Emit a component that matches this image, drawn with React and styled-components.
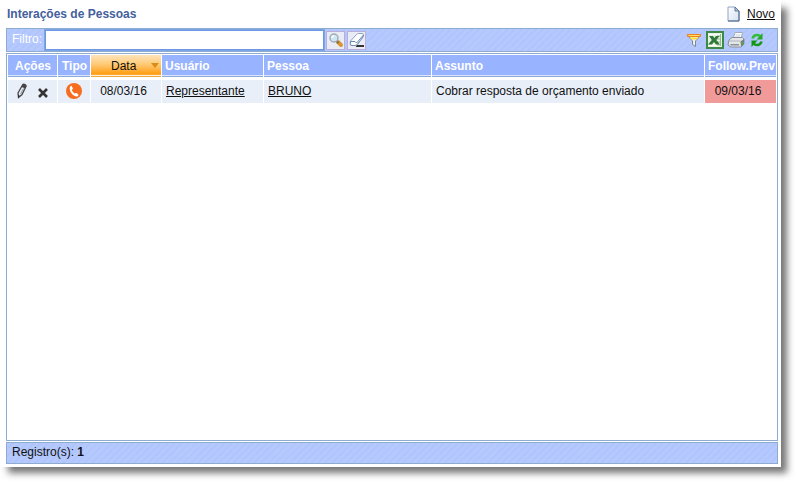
import React from 'react';
import styled, { createGlobalStyle, css } from 'styled-components';

const Global = createGlobalStyle`
  *, *::before, *::after { box-sizing: border-box; }
  body {
    margin: 0;
    background: #fff;
    color: #111;
    font: 12px/16px "Liberation Sans", Arial, sans-serif;
  }
`;

const Page = styled.div`
  display: flex;
  min-height: 100vh;
  padding: 0 14px 14px 0;
`;

const Panel = styled.main`
  flex: 1;
  min-width: 0;
  display: flex;
  flex-direction: column;
  gap: 1px;
  padding: 0 3px 3px 6px;
  background: #fff;
  box-shadow: 7px 7px 7px -1px rgba(0, 0, 0, 0.54);
`;

const TitleBar = styled.header`
  display: flex;
  align-items: center;
  justify-content: space-between;
  height: 27px;
  padding: 0 3px 0 1px;
`;

const Title = styled.h1`
  margin: 0;
  font-size: 12px;
  line-height: 16px;
  color: #43609c;
`;

const NewLink = styled.a`
  display: flex;
  align-items: center;
  gap: 7px;
  height: 26px;
  color: #111;
`;

const Strip = styled.div`
  display: flex;
  align-items: center;
  border: 1px solid #8eabd0;
  background: repeating-linear-gradient(135deg, #b5c9fe 0 3px, #afc5fb 3px 5px);
`;

const FilterBar = styled(Strip)`
  height: 24px;
  padding: 0 11px 0 5px;
`;

const FilterLabel = styled.label`
  width: 33px;
  padding-bottom: 3px;
  color: #fff;
`;

const FilterInput = styled.input`
  width: 279px;
  height: 20px;
  padding: 1px 3px;
  border: 1px solid #6c97e2;
  outline: 1px solid #7ea4ea;
  outline-offset: 0;
  background: #fff;
  font: inherit;
`;

const SearchButtons = styled.div`
  display: flex;
  gap: 2px;
  margin-left: 2px;
`;

const SmallButton = styled.button`
  display: flex;
  align-items: center;
  justify-content: center;
  width: 19px;
  height: 19px;
  padding: 0;
  border: 1px solid #b9aedb;
  background: #e9ebf5;
`;

const Tools = styled.div`
  display: flex;
  gap: 3px;
  margin-left: auto;
`;

const IconButton = styled.button`
  display: flex;
  align-items: center;
  justify-content: center;
  width: 18px;
  height: 18px;
  padding: 0;
  border: 0;
  background: transparent;
`;

const ListArea = styled.section`
  flex: 1;
  padding: 1px 0 1px 1px;
  border: 1px solid #8eabd0;
  background: #fff;
`;

const Table = styled.table`
  width: 100%;
  table-layout: fixed;
  border-spacing: 0;
`;

const Col = styled.col`
  width: ${({ $width }) => ($width ? `${$width}px` : 'auto')};
`;

const cell = css`
  overflow: hidden;
  padding: 0 0 0 4px;
  border-right: 1px solid #fff;
  text-align: ${({ $center }) => ($center ? 'center' : 'left')};
  white-space: nowrap;
`;

const HeadCell = styled.th`
  ${cell}
  height: 25px;
  padding: 0 0 4px ${({ $center }) => ($center ? '1px' : '3px')};
  background: linear-gradient(#98b3ff 0 20px, #dce6fc 20px 21px, #8aaad8 21px 22px, #fff 22px);
  color: #fff;
`;

const SortedCell = styled(HeadCell)`
  background: linear-gradient(#fee3bb 0, #ffcb78 9px, #ff9d13 19px, #ffb64d 20px, #fff0d8 20px 21px, #f0a73b 21px 22px, #fff 22px);
`;

const SortButton = styled.button`
  display: flex;
  align-items: center;
  justify-content: space-between;
  width: 100%;
  padding: 0 1px 0 19px;
  border: 0;
  background: transparent;
  color: #111;
  font: inherit;
  font-weight: 400;
`;

const BodyCell = styled.td`
  ${cell}
  height: 23px;
  padding-bottom: 2px;
  padding-left: ${({ $center }) => ($center ? '0' : '4px')};
  background: ${({ $late }) => ($late ? '#f09a9a' : '#e8eff9')};
`;

const DateText = styled.span`
  padding-right: 5px;
`;

const RowActions = styled.div`
  display: flex;
  align-items: center;
  justify-content: center;
  gap: 3px;
`;

const TypeMark = styled.span`
  display: flex;
  justify-content: center;
`;

const RecordLink = styled.a`
  color: #111;
  text-underline-offset: 1px;
`;

const StatusBar = styled(Strip)`
  height: 22px;
  padding: 0 5px 2px;
  white-space: pre;
`;

const PageIcon = () => (
  <svg width="13" height="16" viewBox="0 0 13 16" aria-hidden="true">
    <defs>
      <linearGradient id="sheet" x1="0" y1="0" x2="1" y2="1">
        <stop offset="0" stopColor="#fff" />
        <stop offset="1" stopColor="#d3e0f2" />
      </linearGradient>
    </defs>
    <path d="M1 1h7l4 4v10H1z" fill="url(#sheet)" stroke="#8ea5c4" />
    <path d="M1 15h11V5" fill="none" stroke="#4c6484" />
    <path d="M8 1v4h4z" fill="#b5c7df" stroke="#5f7896" />
  </svg>
);

const SearchIcon = () => (
  <svg width="16" height="16" viewBox="0 0 16 16" aria-hidden="true">
    <path d="M10 10l3 3" stroke="#d9972f" strokeWidth="4" strokeLinecap="round" />
    <path d="M8.500 9l2 2" stroke="#6f6b66" strokeWidth="2" />
    <circle cx="6" cy="6" r="4" fill="#cfe6f6" stroke="#a3abb8" strokeWidth="1.500" />
    <path d="M4 6a2 2 0 0 1 2-2" fill="none" stroke="#fff" strokeWidth="1.500" />
  </svg>
);

const EraserIcon = () => (
  <svg width="16" height="16" viewBox="0 0 16 16" aria-hidden="true">
    <path d="M7 14h8" stroke="#333" strokeWidth="2" />
    <path d="M1.500 9L7.500 2.500q1-1 2-1h3.500q2 0 1.500 2.500l-6 8.500q-1 1-2 1H3q-2 0-2-2z" fill="#fff" stroke="#8ba2c1" />
    <path d="M1.500 9.500h4.500l1.500 1.500 6.500-7.500v1.500l-6 7.500q-.7 1-2 1H3q-2 0-1.500-2z" fill="#fff" stroke="#6d8db8" />
  </svg>
);

const FunnelIcon = () => (
  <svg width="16" height="16" viewBox="0 0 16 16" aria-hidden="true">
    <path d="M2 4h12l-4.500 5v5.500l-3-2V9z" fill="#edf0f2" stroke="#7f8a96" />
    <path d="M3.500 5.500h9l-2 2h-5z" fill="#ffde35" />
    <path d="M1.500 2.500h13v2h-13z" fill="#ff9d2d" stroke="#ed8320" />
    <path d="M2.500 3.500h11" stroke="#ffe45b" />
  </svg>
);

const SheetIcon = () => (
  <svg width="18" height="18" viewBox="0 0 18 18" aria-hidden="true">
    <path d="M1 1h16v16H1z" fill="#e9f3e4" stroke="#3c8a45" strokeWidth="2" />
    <path d="M3 3.500h12M3 14.500h12" stroke="#fff" />
    <path d="M11 5h4M11 8h4M11 11h4M11 14h4M14.500 3v12" stroke="#8fbd8b" />
    <path d="M3 5h4l1.400 2L10 5h3.500L10.300 9l3.700 4.500H10l-2-2.500-2 2.500H2L5.800 9z" fill="#2f7a3b" />
  </svg>
);

const PrinterIcon = () => (
  <svg width="18" height="18" viewBox="0 0 18 18" aria-hidden="true">
    <path d="M6 8l2-6.500h7.500L14 8z" fill="#fff" stroke="#a0abbc" />
    <path d="M8.500 4h5M8 6h5" stroke="#c3ccd8" />
    <path d="M2 9l3-2.500h10.500L17 8v5l-3 3H4l-3-2z" fill="#e3e5e7" stroke="#8a9098" />
    <path d="M13.500 10.500L17 8v5l-3 3z" fill="#777d84" />
    <path d="M2 10h11.500" stroke="#b1b6bc" fill="none" />
    <path d="M3 13h9v1.500H4z" fill="#8b9198" />
    <path d="M14.500 12.500h2" stroke="#4bb438" strokeWidth="2" />
  </svg>
);

const RefreshIcon = () => (
  <svg width="16" height="16" viewBox="0 0 16 16" aria-hidden="true">
    <path d="M3.500 6.500Q4.500 3 8 3q2.200 0 3.500 1.500" fill="none" stroke="#35bd35" strokeWidth="2.600" />
    <path d="M13.500 1v6.500H7.500z" fill="#24aa28" />
    <path d="M12.500 9.500Q11.500 13 8 13q-2.200 0-3.500-1.500" fill="none" stroke="#179a1c" strokeWidth="2.600" />
    <path d="M2.500 15V8.500h6z" fill="#129419" />
  </svg>
);

const PencilIcon = () => (
  <svg width="16" height="16" viewBox="0 0 16 16" aria-hidden="true">
    <path d="M4 10l4.500-8q1-1.300 2.500-.5t1 2L8 11.500l-3.500 3z" fill="#e8eff9" stroke="#444" strokeWidth="1.300" />
    <path d="M8.500 2q1-1.300 2.500-.5t1 2l-1 1.800L7.300 4z" fill="#444" />
    <path d="M9.500 5.500L6.500 11" stroke="#777" strokeWidth=".8" />
    <path d="M4 11.500l2 1.500-2 2z" fill="#333" />
  </svg>
);

const DeleteIcon = () => (
  <svg width="16" height="16" viewBox="0 0 16 16" aria-hidden="true">
    <path d="M4 6l8 8M12 6l-8 8" stroke="#333" strokeWidth="2.600" />
  </svg>
);

const PhoneIcon = () => (
  <svg width="18" height="18" viewBox="0 0 18 18" role="img" aria-label="Telefone">
    <circle cx="9" cy="9" r="8" fill="#f76d20" />
    <path d="M6.300 3.500L8 6.500 6.800 8q.8 2.500 3 3.600l1.600-.9 2.300 2.200-1.300 1.500q-2 .8-4.700-1.600T4.700 7q-.2-2.300 1.600-3.500z" fill="#fff" />
  </svg>
);

const SortArrow = () => (
  <svg width="10" height="6" viewBox="0 0 10 6" aria-hidden="true">
    <path d="M1 0h8L5 5z" fill="#d98c16" />
  </svg>
);

const tools = [
  { name: 'Filtrar', Icon: FunnelIcon },
  { name: 'Exportar para Excel', Icon: SheetIcon },
  { name: 'Imprimir', Icon: PrinterIcon },
  { name: 'Atualizar', Icon: RefreshIcon },
];

const columnWidths = [50, 33, 71, 102, 168, null, 72];

const records = [
  {
    date: '08/03/16',
    user: 'Representante',
    person: 'BRUNO',
    subject: 'Cobrar resposta de orçamento enviado',
    followUp: '09/03/16',
    late: true,
  },
];

export default function App() {
  return (
    <>
      <Global />
      <Page>
        <Panel>
          <TitleBar>
            <Title>Interações de Pessoas</Title>
            <NewLink href="#novo"><PageIcon />Novo</NewLink>
          </TitleBar>
          <FilterBar>
            <FilterLabel htmlFor="filtro">Filtro:</FilterLabel>
            <FilterInput id="filtro" type="text" />
            <SearchButtons>
              <SmallButton type="button" aria-label="Pesquisar"><SearchIcon /></SmallButton>
              <SmallButton type="button" aria-label="Limpar"><EraserIcon /></SmallButton>
            </SearchButtons>
            <Tools>
              {tools.map(({ name, Icon }) => (
                <IconButton key={name} type="button" aria-label={name}><Icon /></IconButton>
              ))}
            </Tools>
          </FilterBar>
          <ListArea>
            <Table>
              <colgroup>
                {columnWidths.map((width, i) => <Col key={i} $width={width} />)}
              </colgroup>
              <thead>
                <tr>
                  <HeadCell $center>Ações</HeadCell>
                  <HeadCell $center>Tipo</HeadCell>
                  <SortedCell $center aria-sort="descending">
                    <SortButton type="button">Data<SortArrow /></SortButton>
                  </SortedCell>
                  <HeadCell>Usuário</HeadCell>
                  <HeadCell>Pessoa</HeadCell>
                  <HeadCell>Assunto</HeadCell>
                  <HeadCell>Follow.Prev</HeadCell>
                </tr>
              </thead>
              <tbody>
                {records.map((r) => (
                  <tr key={r.subject}>
                    <BodyCell $center>
                      <RowActions>
                        <IconButton type="button" aria-label="Editar"><PencilIcon /></IconButton>
                        <IconButton type="button" aria-label="Excluir"><DeleteIcon /></IconButton>
                      </RowActions>
                    </BodyCell>
                    <BodyCell $center><TypeMark><PhoneIcon /></TypeMark></BodyCell>
                    <BodyCell $center><DateText>{r.date}</DateText></BodyCell>
                    <BodyCell><RecordLink href="#usuario">{r.user}</RecordLink></BodyCell>
                    <BodyCell><RecordLink href="#pessoa">{r.person}</RecordLink></BodyCell>
                    <BodyCell>{r.subject}</BodyCell>
                    <BodyCell $center $late={r.late}><DateText>{r.followUp}</DateText></BodyCell>
                  </tr>
                ))}
              </tbody>
            </Table>
          </ListArea>
          <StatusBar>Registro(s): <b>{records.length}</b></StatusBar>
        </Panel>
      </Page>
    </>
  );
}
